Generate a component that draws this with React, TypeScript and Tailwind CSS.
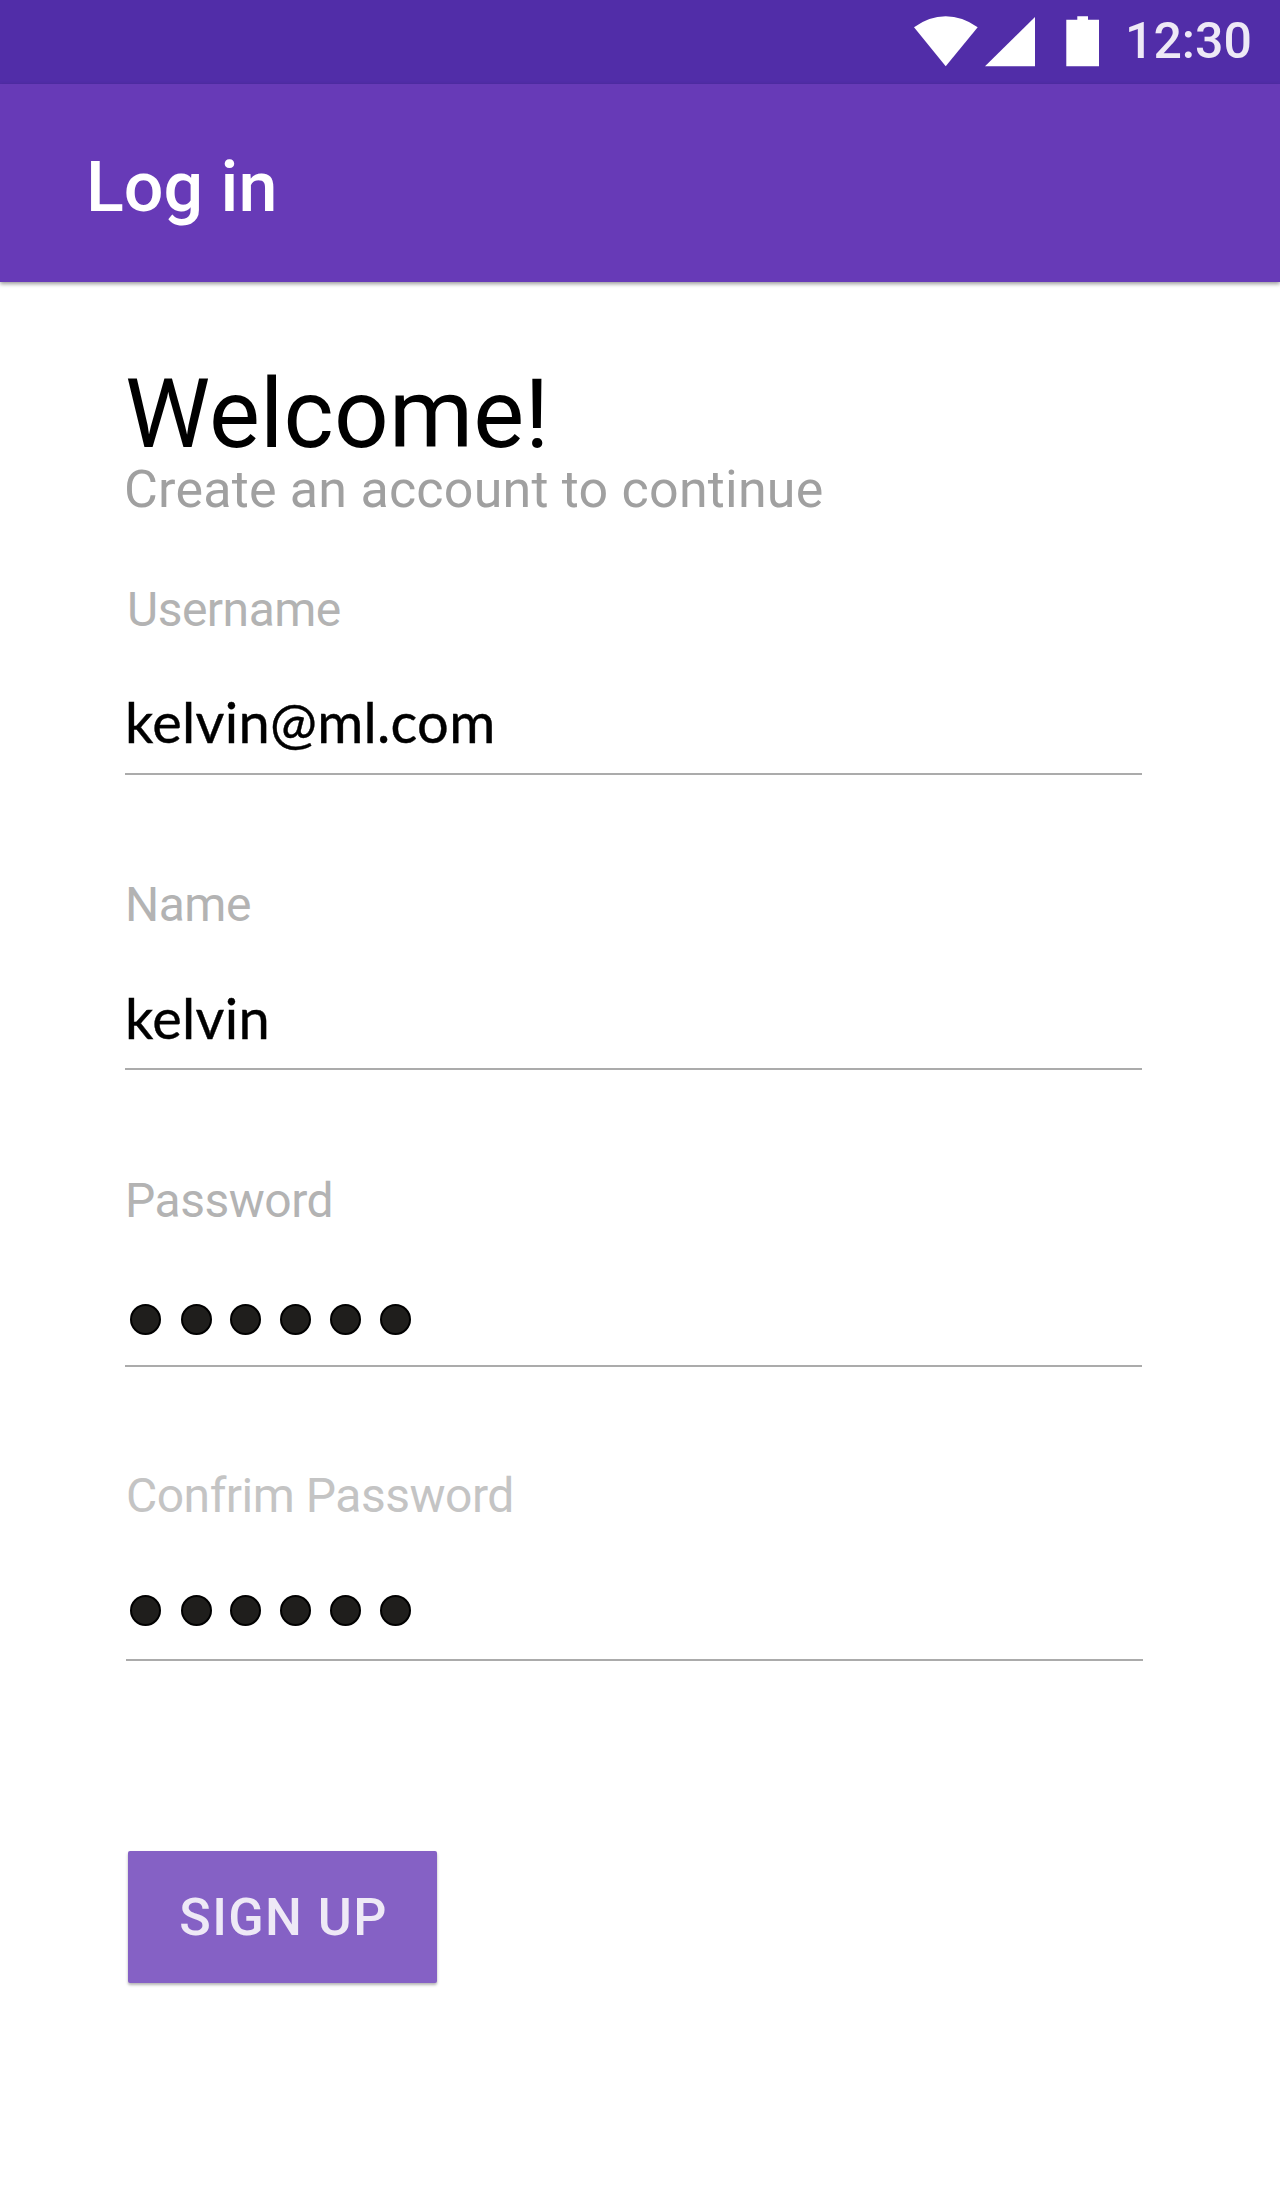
import React from "react";

function Field({ label, labelClass, children, className }: { label: string; labelClass: string; children: React.ReactNode; className: string }) {
  return (
    <div className={`border-b-2 border-[#ababab] w-[1017px] ${className}`}>
      <div className={`text-[48px] leading-[56px] whitespace-nowrap tracking-[-0.5px] ${labelClass}`}>{label}</div>
      {children}
    </div>
  );
}

function Value({ text, className }: { text: string; className: string }) {
  return (
    <div className={`font-['Lato',sans-serif] text-[56px] leading-[68px] tracking-[0.3px] text-black [-webkit-text-stroke:0.4px_black] ${className}`}>{text}</div>
  );
}

function Dots({ className }: { className: string }) {
  return (
    <div className={`flex gap-[19px] ${className}`}>
      {[0, 1, 2, 3, 4, 5].map((i) => (
        <span key={i} className={`size-[31px] rounded-full bg-[#1f1e1c] border-2 border-black ${i === 1 ? "ml-px -mr-px" : ""}`} />
      ))}
    </div>
  );
}

export default function App() {
  return (
    <div className="w-[1280px] h-[2208px] bg-white overflow-hidden font-['Roboto',sans-serif]">
      <div className="h-[84px] bg-[#512da8] flex justify-end">
        <svg width="200" height="84" viewBox="900 0 200 84" fill="white">
          <path d="M914 27.300Q929 16.300 945.700 16.300T977.700 27.300L945.700 66.300Z" />
          <path d="M1035 17V66.300H985Z" />
          <path d="M1066.300 19.700h11v-3.500h10.700v3.500h11v46.600h-32.700z" />
        </svg>
        <div className="w-[180px] pl-[25px] pt-[11px] text-[50px] leading-[60px] font-medium text-[#eee9f6] whitespace-nowrap">12:30</div>
      </div>
      <header className="h-[198px] bg-[#673ab7] shadow-[0_2px_4px_rgba(0,0,0,0.4)] pl-[86px] pt-[62px]">
        <h1 className="text-[70px] leading-[82px] font-medium text-white">Log in</h1>
      </header>
      <main className="pl-[125px] pt-[76px]">
        <h2 className="text-[96px] leading-[112px] text-black tracking-[0.2px]">Welcome!</h2>
        <p className="-mt-[10px] -ml-px text-[52px] leading-[60px] text-[#a0a0a0] tracking-[0.22px]">Create an account to continue</p>
        <Field label="Username" labelClass="text-[#b3b3b3] pl-[2px]" className="h-[193px] mt-[62px]">
          <Value text="kelvin@ml.com" className="mt-[50px]" />
        </Field>
        <Field label="Name" labelClass="text-[#b3b3b3]" className="h-[193px] mt-[102px]">
          <Value text="kelvin" className="mt-[51px]" />
        </Field>
        <Field label="Password" labelClass="text-[#b3b3b3]" className="h-[194px] mt-[103px]">
          <Dots className="mt-[75px] pl-[5px]" />
        </Field>
        <Field label="Confrim Password" labelClass="text-[#c4c4c4]" className="h-[193px] mt-[101px] ml-px">
          <Dots className="mt-[71px] pl-[4px]" />
        </Field>
        <button className="mt-[190px] ml-[3px] w-[309px] h-[132px] pt-[2px] pl-[2px] bg-[#8561c5] text-[#eee9f6] text-[52px] tracking-[1.4px] font-medium rounded-[2px] shadow-[0_2px_3px_rgba(0,0,0,0.3)]">SIGN UP</button>
      </main>
    </div>
  );
}
